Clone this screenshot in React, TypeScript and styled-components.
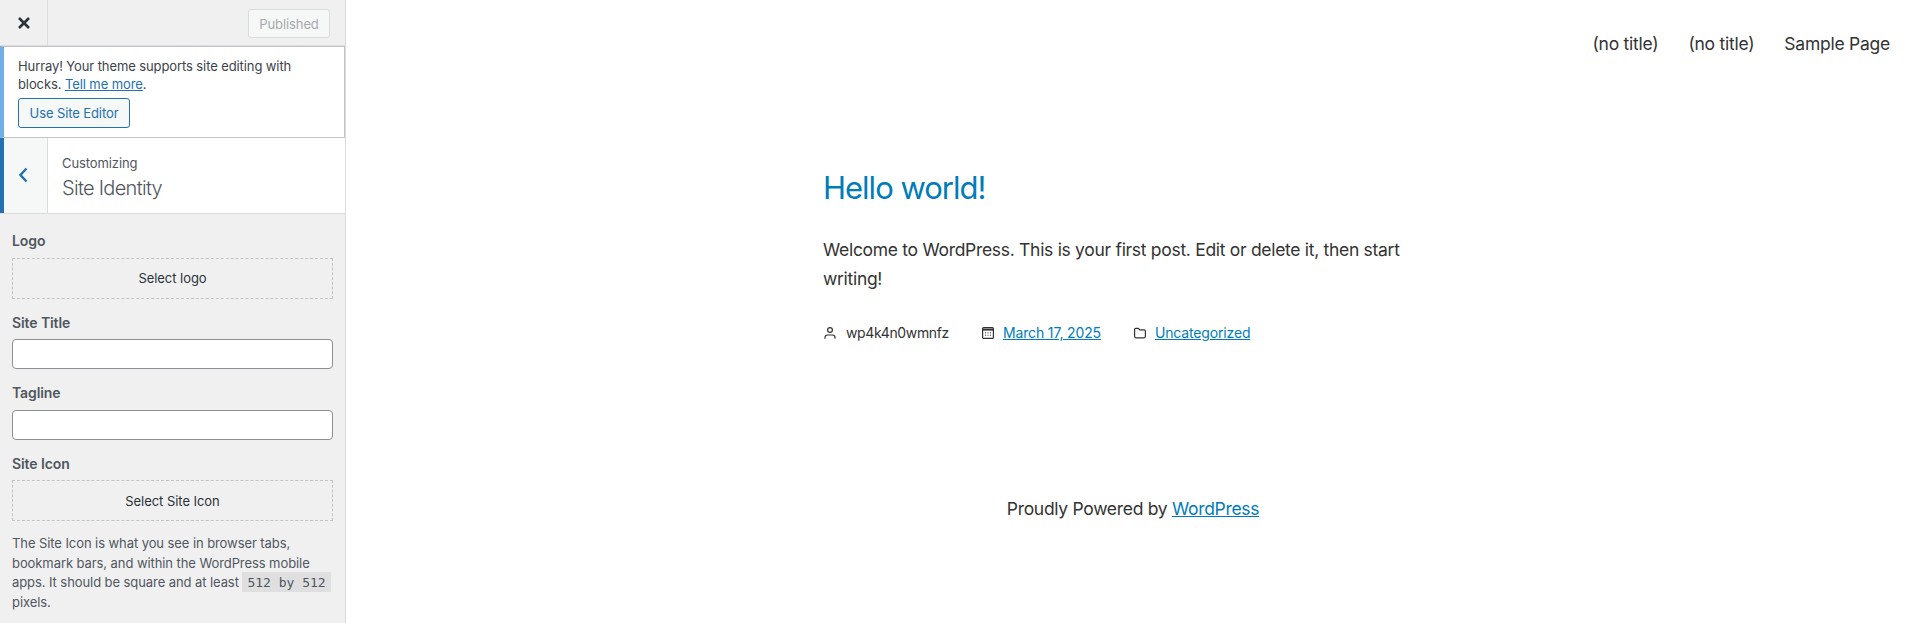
import React from 'react';
import styled, { createGlobalStyle } from 'styled-components';

const GlobalStyle = createGlobalStyle`
  html, body {
    margin: 0;
    padding: 0;
    height: 100%;
    overflow: hidden;
    background: #fff;
  }
  * {
    box-sizing: border-box;
  }
`;

const App = () => (
  <Page>
    <GlobalStyle />
    <Sidebar>
      <TopBar>
        <CloseButton aria-label='Close'>
          <svg width='14' height='14' viewBox='0 0 14 14'>
            <path d='M2 2 L12 12 M12 2 L2 12' stroke='#2c3338' strokeWidth='2.6' />
          </svg>
        </CloseButton>
        <PublishedButton>Published</PublishedButton>
      </TopBar>
      <Notice>
        <NoticeText>
          Hurray! Your theme supports site editing with blocks. <NoticeLink href='#'>Tell me more</NoticeLink>.
        </NoticeText>
        <EditorButton>Use Site Editor</EditorButton>
      </Notice>
      <SectionHeader>
        <BackButton aria-label='Back'>
          <svg width='10' height='16' viewBox='0 0 10 16'>
            <path d='M8.5 1.5 L2.5 8 L8.5 14.5' fill='none' stroke='#2271b1' strokeWidth='2.4' />
          </svg>
        </BackButton>
        <SectionTitle>
          <Crumb>Customizing</Crumb>
          <SectionName>Site Identity</SectionName>
        </SectionTitle>
      </SectionHeader>
      <Controls>
        <FieldLabel>Logo</FieldLabel>
        <MediaButton>Select logo</MediaButton>
        <FieldLabel>Site Title</FieldLabel>
        <TextField type='text' />
        <FieldLabel>Tagline</FieldLabel>
        <TextField type='text' />
        <FieldLabel>Site Icon</FieldLabel>
        <MediaButton>Select Site Icon</MediaButton>
        <HelpText>
          The Site Icon is what you see in browser tabs, bookmark bars, and within the WordPress mobile apps. It should be square and at least <Code>512 by 512</Code> pixels.
        </HelpText>
      </Controls>
    </Sidebar>
    <Preview>
      <Nav>
        <NavItem>(no title)</NavItem>
        <NavItem>(no title)</NavItem>
        <NavItem>Sample Page</NavItem>
      </Nav>
      <Article>
        <PostTitle>Hello world!</PostTitle>
        <PostBody>Welcome to WordPress. This is your first post. Edit or delete it, then start writing!</PostBody>
        <Meta>
          <MetaItem>
            <svg width='14' height='14' viewBox='0 0 14 14' fill='none' stroke='#333' strokeWidth='1.2'>
              <circle cx='7' cy='4' r='2.4' />
              <path d='M2 12.8 V11.4 C2 9.8 3.2 9 4.4 9 H9.6 C10.8 9 12 9.8 12 11.4 V12.8' />
            </svg>
            <AuthorName>wp4k4n0wmnfz</AuthorName>
          </MetaItem>
          <MetaItem>
            <svg width='14' height='14' viewBox='0 0 14 14' fill='none' stroke='#333'>
              <rect x='1.6' y='1.6' width='10.8' height='10.8' rx='1' strokeWidth='1.2' />
              <path d='M1.6 3.6 H12.4' strokeWidth='2' />
              <path d='M4 6.8 H5 M6.5 6.8 H7.5 M9 6.8 H10 M4 9.2 H5 M6.5 9.2 H7.5 M9 9.2 H10' strokeWidth='1' />
            </svg>
            <MetaLink href='#'>March 17, 2025</MetaLink>
          </MetaItem>
          <MetaItem>
            <svg width='14' height='14' viewBox='0 0 14 14' fill='none' stroke='#333' strokeWidth='1.2'>
              <path d='M1.6 3.6 C1.6 2.8 2.1 2.4 2.8 2.4 H5.4 L6.8 3.9 H11.2 C11.9 3.9 12.4 4.4 12.4 5.1 V10.6 C12.4 11.3 11.9 11.8 11.2 11.8 H2.8 C2.1 11.8 1.6 11.3 1.6 10.6 Z' />
            </svg>
            <MetaLink href='#'>Uncategorized</MetaLink>
          </MetaItem>
        </Meta>
      </Article>
      <Footer>
        Proudly Powered by <FooterLink href='#'>WordPress</FooterLink>
      </Footer>
    </Preview>
  </Page>
);

export default App;

const Page = styled.div`
  width: 1920px;
  height: 623px;
  display: flex;
  overflow: hidden;
  font-family: Inter, 'Noto Sans', sans-serif;
`;

const Sidebar = styled.aside`
  width: 346px;
  height: 623px;
  flex-shrink: 0;
  display: flex;
  flex-direction: column;
  background: #f0f0f1;
  border-right: 1px solid #dcdcde;
  color: #50575e;
  font-size: 13px;
  overflow: hidden;
`;

const TopBar = styled.div`
  height: 46px;
  flex-shrink: 0;
  display: flex;
  align-items: center;
  justify-content: space-between;
  padding-right: 15px;
  border-bottom: 1px solid #dcdcde;
`;

const CloseButton = styled.button`
  width: 48px;
  height: 45px;
  padding: 0;
  display: flex;
  align-items: center;
  justify-content: center;
  background: transparent;
  border: 0;
  border-right: 1px solid #dcdcde;
`;

const PublishedButton = styled.button`
  width: 82px;
  height: 29px;
  margin-top: 2px;
  padding: 0;
  font-family: inherit;
  font-size: 13px;
  letter-spacing: -0.1px;
  color: #a7aaad;
  background: #f6f7f7;
  border: 1px solid #dcdcde;
  border-radius: 3px;
`;

const Notice = styled.div`
  height: 92px;
  flex-shrink: 0;
  padding: 10px 14px 0 14px;
  background: #fff;
  border: 1px solid #c3c4c7;
  border-left: 4px solid #72aee6;
  color: #3c434a;
`;

const NoticeText = styled.p`
  margin: 0;
  width: 300px;
  font-size: 13px;
  line-height: 18px;
  letter-spacing: -0.1px;
`;

const NoticeLink = styled.a`
  color: #2271b1;
`;

const EditorButton = styled.button`
  display: block;
  margin-top: 5px;
  width: 112px;
  height: 30px;
  padding: 0;
  font-family: inherit;
  font-size: 13px;
  letter-spacing: -0.1px;
  color: #2271b1;
  background: #f6f7f7;
  border: 1px solid #2271b1;
  border-radius: 3px;
`;

const SectionHeader = styled.div`
  height: 76px;
  flex-shrink: 0;
  display: flex;
  background: #fff;
  border-bottom: 1px solid #dcdcde;
`;

const BackButton = styled.button`
  width: 48px;
  padding: 0 5px 1px 0;
  display: flex;
  align-items: center;
  justify-content: center;
  background: #f6f7f7;
  border: 0;
  border-left: 4px solid #2271b1;
  border-right: 1px solid #dcdcde;
`;

const SectionTitle = styled.div`
  padding: 16px 0 0 14px;
  display: flex;
  flex-direction: column;
  color: #50575e;
`;

const Crumb = styled.span`
  font-size: 13px;
  line-height: 18px;
  letter-spacing: -0.1px;
`;

const SectionName = styled.span`
  margin-top: 3px;
  font-size: 20px;
  font-weight: 300;
  line-height: 26px;
  letter-spacing: -0.7px;
`;

const Controls = styled.div`
  padding: 17px 12px 0 12px;
  display: flex;
  flex-direction: column;
`;

const FieldLabel = styled.label`
  font-size: 14px;
  font-weight: 600;
  line-height: 20px;
  letter-spacing: -0.1px;
  margin-bottom: 6.5px;
`;

const MediaButton = styled.button`
  width: 321px;
  height: 41px;
  margin-bottom: 14px;
  padding: 0;
  font-family: inherit;
  font-size: 13px;
  letter-spacing: -0.05px;
  color: #2c3338;
  background: transparent;
  border: 1px dashed #c3c4c7;
`;

const TextField = styled.input`
  width: 321px;
  height: 30px;
  margin-bottom: 14px;
  background: #fff;
  border: 1px solid #8c8f94;
  border-radius: 4px;
`;

const HelpText = styled.p`
  margin: -1px 0 0;
  width: 322px;
  font-size: 13px;
  line-height: 19.5px;
  letter-spacing: -0.08px;
`;

const Code = styled.code`
  padding: 3px 5px 2px;
  font-family: 'DejaVu Sans Mono', monospace;
  font-size: 13px;
  letter-spacing: 0;
  white-space: nowrap;
  background: rgba(0, 0, 0, 0.07);
`;

const Preview = styled.main`
  flex: 1;
  display: flex;
  flex-direction: column;
  background: #fff;
  color: #333;
`;

const Nav = styled.nav`
  height: 87px;
  flex-shrink: 0;
  padding-right: 30px;
  display: flex;
  justify-content: flex-end;
  align-items: center;
  gap: 30px;
  font-size: 17.5px;
  letter-spacing: -0.25px;
`;

const NavItem = styled.span`
  line-height: 1;
`;

const Article = styled.article`
  width: 600px;
  margin: 0 0 0 477px;
  padding-top: 79px;
`;

const PostTitle = styled.h1`
  margin: 0;
  font-size: 31px;
  font-weight: 400;
  line-height: 44px;
  letter-spacing: -1px;
  color: #007cba;
`;

const PostBody = styled.p`
  margin: 25px 0 0;
  font-size: 17.5px;
  line-height: 29px;
  letter-spacing: -0.3px;
`;

const Meta = styled.div`
  margin-top: 30px;
  display: flex;
  gap: 32px;
  font-size: 14px;
  line-height: 20px;
  letter-spacing: -0.15px;
`;

const MetaItem = styled.div`
  display: flex;
  align-items: center;
  gap: 8px;
`;

const AuthorName = styled.span`
  margin-left: 1px;
  letter-spacing: -0.35px;
`;

const MetaLink = styled.a`
  color: #007cba;
`;

const Footer = styled.footer`
  margin-top: 153px;
  font-size: 17.5px;
  line-height: 26px;
  letter-spacing: -0.3px;
  text-align: center;
`;

const FooterLink = styled.a`
  color: #007cba;
`;
